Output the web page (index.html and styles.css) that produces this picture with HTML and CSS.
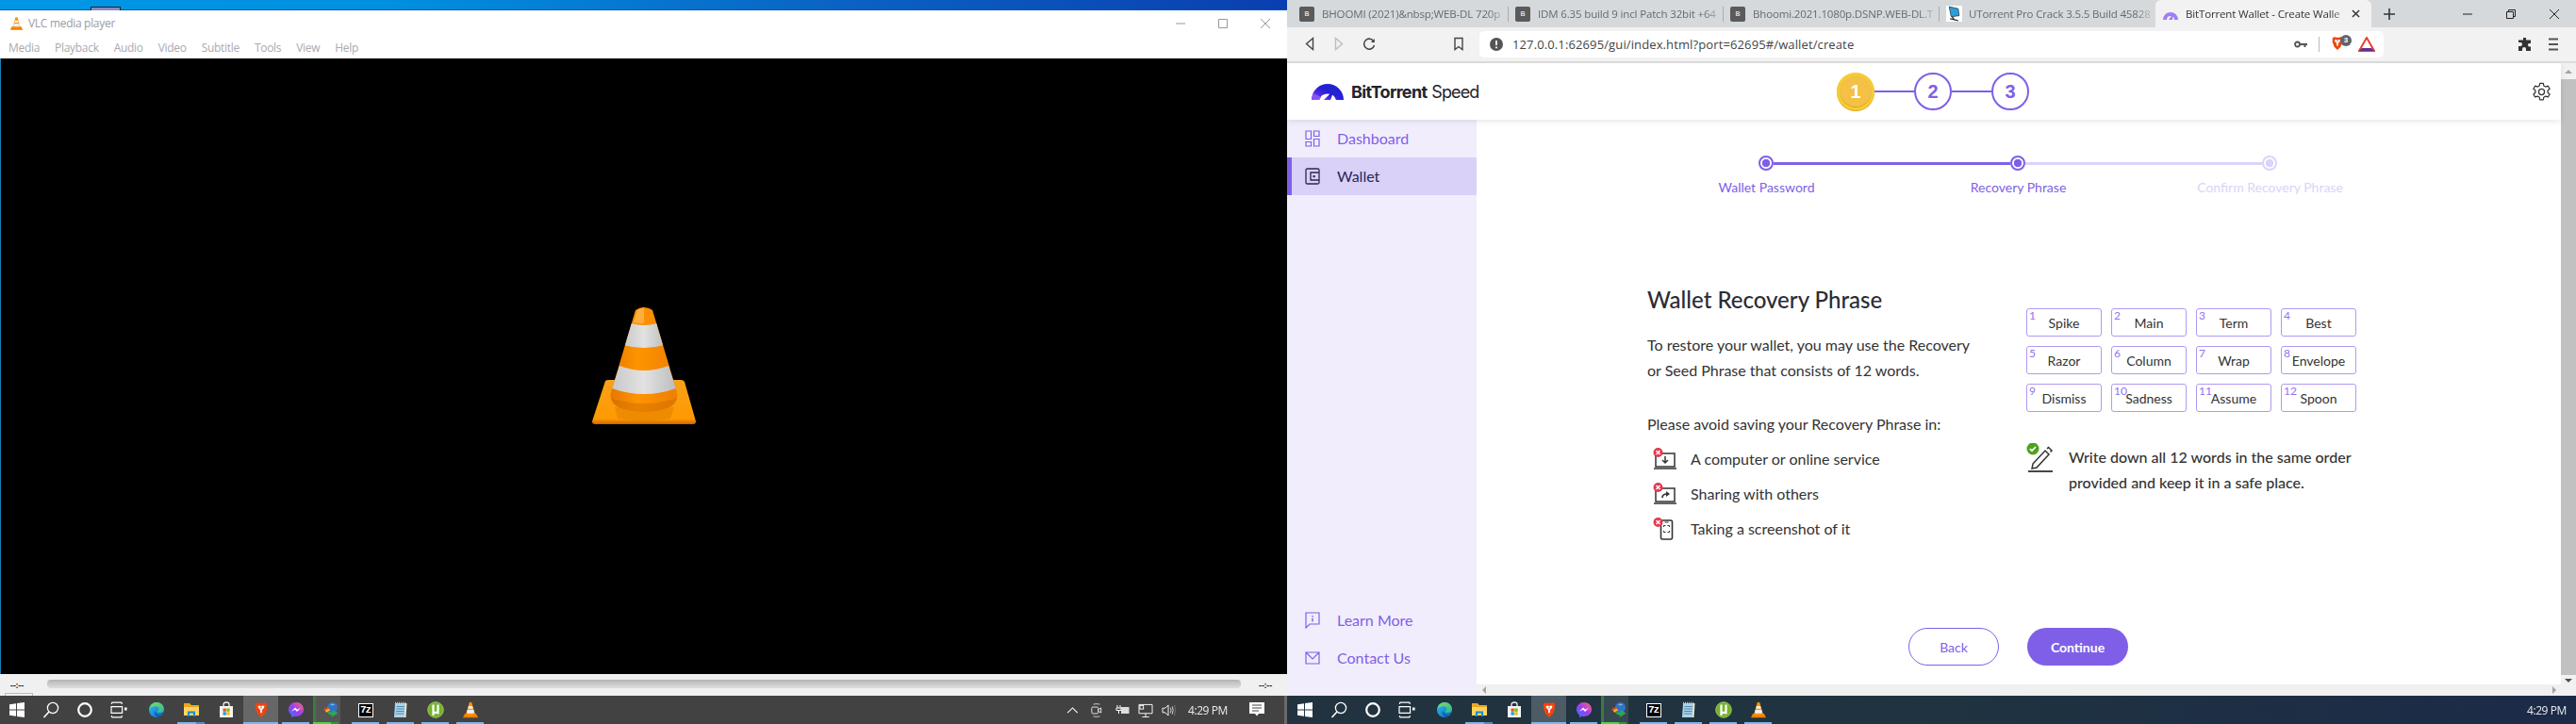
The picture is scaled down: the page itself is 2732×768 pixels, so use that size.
FILE: index.html
```html
<!DOCTYPE html>
<html lang="en">
<head>
<meta charset="utf-8">
<title>VLC and BitTorrent Wallet</title>
<link rel="stylesheet" href="styles.css">
</head>
<body>
<svg class="sprite" aria-hidden="true">
  <defs>
    <linearGradient id="gEdge" x1="0" y1="0" x2="1" y2="1"><stop offset="0" stop-color="#35c1f1"/><stop offset=".55" stop-color="#1b8fd6"/><stop offset="1" stop-color="#0b55a8"/></linearGradient>
    <linearGradient id="gEdgeG" x1="0" y1="0" x2="1" y2="1"><stop offset="0" stop-color="#7fe05a"/><stop offset="1" stop-color="#2ab5a0"/></linearGradient>
    <linearGradient id="gMsg" x1="0" y1="1" x2="1" y2="0"><stop offset="0" stop-color="#2a7bff"/><stop offset=".5" stop-color="#a03cf0"/><stop offset="1" stop-color="#ff6a6a"/></linearGradient>
    <linearGradient id="gCone" x1="0" y1="0" x2="1" y2="0"><stop offset="0" stop-color="#e07000"/><stop offset=".4" stop-color="#ff9400"/><stop offset="1" stop-color="#ea7a00"/></linearGradient>
    <linearGradient id="gBase" x1="0" y1="0" x2="0" y2="1"><stop offset="0" stop-color="#f8a11a"/><stop offset=".88" stop-color="#ff9a00"/><stop offset="1" stop-color="#c96400"/></linearGradient>
    <linearGradient id="gBand" x1="0" y1="0" x2="1" y2="0"><stop offset="0" stop-color="#c8c8c8"/><stop offset=".5" stop-color="#e2e2e2"/><stop offset="1" stop-color="#bdbdbd"/></linearGradient>
    <linearGradient id="gLogo" x1="0" y1="1" x2="1" y2="0"><stop offset="0" stop-color="#7a3cf0"/><stop offset=".5" stop-color="#2a1fd8"/><stop offset="1" stop-color="#1426c8"/></linearGradient>
    <clipPath id="coneClip"><path d="M64 19Q73 13 82 19L108 106Q112 126 73 127Q34 126 38 106Z"/></clipPath>
    <symbol id="i-win" viewBox="0 0 18 18"><path fill="#fff" d="M1 3.200 8 2.200V8.400H1ZM9 2 17 1V8.400H9ZM1 9.400H8V15.800L1 14.800ZM9 9.400H17V17L9 16Z"/></symbol>
    <symbol id="i-search" viewBox="0 0 18 18"><circle cx="11" cy="7" r="5.600" fill="none" stroke="#fff" stroke-width="1.300"/><path d="M7 11 1.500 17" stroke="#fff" stroke-width="1.600"/></symbol>
    <symbol id="i-cortana" viewBox="0 0 18 18"><circle cx="9" cy="9" r="6.800" fill="none" stroke="#fff" stroke-width="2.200"/></symbol>
    <symbol id="i-tv" viewBox="0 0 18 18"><path fill="none" stroke="#fff" stroke-width="1.200" d="M1 5.600H12.600V12.400H1ZM1.500 1.200H12.200M1.500 16.800H12.200M1.500 1.200V3M12.200 1.200V3M1.500 15V16.800M12.200 15V16.800"/><rect x="15" y="6.500" width="2.600" height="3" fill="#fff"/></symbol>
    <symbol id="i-edge" viewBox="0 0 18 18"><circle cx="9" cy="9" r="8" fill="url(#gEdge)"/><path fill="url(#gEdgeG)" d="M1.200 8C2.400 3.200 6 1 9 1c4.500 0 8 3.200 8 7.500 0 2.300-2 3.500-4 3.500-1.500 0-3-.5-3-1.500C11.500 9 12 8 11 6.500 9.500 4.500 4 4.500 1.200 8Z"/><path fill="#0e4f9e" d="M7 10c-1 3 1.500 6.500 5.500 6 1-.1 2-.6 2.500-1.200-4 1.200-7-1.300-8-4.800Z"/></symbol>
    <symbol id="i-folder" viewBox="0 0 18 18"><path fill="#e9a821" d="M1 2H7L9 4H17V7H1Z"/><path fill="#ffd45e" d="M1 6H17V15H1Z"/><path fill="#1b87d6" d="M5 16V10.500H13V16H11V12.500H7V16Z"/></symbol>
    <symbol id="i-store" viewBox="0 0 18 18"><path fill="#f4f4f4" d="M2 5H16V17H2Z"/><path fill="none" stroke="#f4f4f4" stroke-width="1.300" d="M6 5V3A3 2 0 0 1 12 3V5"/><rect x="5.500" y="7.500" width="3.300" height="3.300" fill="#f25022"/><rect x="9.300" y="7.500" width="3.300" height="3.300" fill="#7fba00"/><rect x="5.500" y="11.300" width="3.300" height="3.300" fill="#00a4ef"/><rect x="9.300" y="11.300" width="3.300" height="3.300" fill="#ffb900"/></symbol>
    <symbol id="i-brave" viewBox="0 0 18 20"><path fill="#f1440f" d="M4.500 1 6.500 2H11.500L13.500 1 16 3.500 15.500 5.500 16 7.500 13.500 14.500 9 19 4.500 14.500 2 7.500 2.500 5.500 2 3.500Z"/><path fill="#fff" d="M5 5.500 7.500 5 9 6 10.500 5 13 5.500 12 8 10 10V13L9 14 8 13V10L6 8Z"/><path fill="#f1440f" d="M8.200 6.800H9.800L9 9.500Z"/></symbol>
    <symbol id="i-msg" viewBox="0 0 18 18"><path fill="url(#gMsg)" d="M9 1c4.600 0 8 3.300 8 7.600s-3.400 7.500-8 7.500c-.9 0-1.700-.1-2.400-.3L4 17.200V14.500C2.200 13 1 11 1 8.600 1 4.300 4.400 1 9 1Z"/><path fill="#fff" d="M4 10.800 8 6.600l2.300 2.200 3.800-2.200-4 4.400L7.800 8.800Z"/></symbol>
    <symbol id="i-idm" viewBox="0 0 18 18"><circle cx="10.500" cy="6.500" r="5.500" fill="#2f73c9"/><path fill="#7ab2ea" d="M8 3.500c2-1.500 4.500-1 5 .5-1.500.5-4 .5-5-.5Z"/><path fill="#e04a2a" d="M1 9a7 5 0 0 1 7-3L7 8a5 3 0 0 0-4 2.500Z"/><path fill="#f2c21f" d="M3 10.500A5 3 0 0 1 7 8L8 10A3 2 0 0 0 5 12Z"/><path fill="#2fa84f" d="M5 11 11 11.500 10.500 9 16.500 12.500 9.500 17 10 14.500C7.500 14.500 6 13.500 5 11Z"/></symbol>
    <symbol id="i-note" viewBox="0 0 18 18"><path fill="#a9d3ec" d="M3 2H15L14 17H2Z"/><path fill="#f4e8c8" d="M14 2h1.500L14.500 17H13Z"/><path stroke="#4e7f9e" stroke-width=".9" d="M4.500 5.500H13M4.300 8H12.800M4.100 10.500H12.600M3.900 13H12.400"/><path stroke="#dfe9ee" stroke-width="1" stroke-dasharray="1 1" d="M3 1.300H15"/></symbol>
    <symbol id="i-ut" viewBox="0 0 18 18"><circle cx="9" cy="9" r="8.300" fill="#76b22f"/><circle cx="9" cy="9" r="8.300" fill="none" stroke="#a8d468" stroke-width=".8"/><path fill="none" stroke="#fff" stroke-width="2.200" d="M6.500 3.500V15M6.500 11C8 12.500 11.500 12.500 11.500 9.500V3.500"/><path stroke="#fff" stroke-width="2" d="M11.500 10.500V13.500"/></symbol>
    <symbol id="i-vlc" viewBox="0 0 18 18"><path fill="#ef7d00" d="M3 13H15L17 17.200H1Z"/><path fill="#ff9200" d="M7.800 1H10.200L14 14C12 15.500 6 15.500 4 14Z"/><path fill="#eee" d="M7 5H11L11.800 7.800H6.200ZM5.700 9H12.300L13.200 12.200C11 13 7 13 4.800 12.200Z"/></symbol>
    <symbol id="i-cone" viewBox="0 0 140 150">
      <path fill="url(#gBase)" d="M32 94Q33 93 36 93H112Q115 93 116 95L128 137Q128 140 125 140H21Q18 140 18 137Z"/>
      <path fill="#e58200" opacity=".65" d="M42 122H105L101 134Q73 138 45 134Z"/>
      <g clip-path="url(#coneClip)">
        <rect x="30" y="10" width="90" height="120" fill="url(#gCone)"/>
        <path fill="url(#gBand)" d="M59 33Q73 37 87 33L95 56Q73 62 51 56Z"/>
        <path fill="url(#gBand)" d="M47 78Q73 88 99 78L107 102Q73 114 39 102Z"/>
        <path fill="#c96a00" opacity=".45" d="M38 112Q73 124 108 112V130H38Z"/>
      </g>
      <path fill="#fff" opacity=".25" d="M66 19Q70 16 73 16V33Q68 33 62 32Z"/>
    </symbol>
  </defs>
</svg>

<div class="desktop">
  <section class="screen screen-left">
    <div class="wallpaper"><span class="peek"></span></div>
    <div class="vlc">
      <div class="vlc-title">
        <svg class="vlc-logo"><use href="#i-vlc"/></svg>
        <span class="vlc-name">VLC media player</span>
        <div class="vlc-winbtns">
          <svg class="wb" viewBox="0 0 10 10"><path d="M0 5H10" stroke="#999" stroke-width="1"/></svg>
          <svg class="wb" viewBox="0 0 10 10"><path d="M.5.500H9.500V9.500H.5Z" fill="none" stroke="#999" stroke-width="1"/></svg>
          <svg class="wb" viewBox="0 0 10 10"><path d="M0 0 10 10M10 0 0 10" stroke="#999" stroke-width="1"/></svg>
        </div>
      </div>
      <nav class="vlc-menu">
        <span>Media</span><span>Playback</span><span>Audio</span><span>Video</span><span>Subtitle</span><span>Tools</span><span>View</span><span>Help</span>
      </nav>
      <div class="vlc-video"><svg class="cone"><use href="#i-cone"/></svg></div>
      <div class="vlc-controls">
        <span class="vlc-time">--:--</span>
        <div class="vlc-slider"></div>
        <span class="vlc-time">--:--</span>
        <span class="vlc-tab"></span>
      </div>
    </div>
    <footer class="taskbar tb-left">
      <div class="tb-sys"><svg class="ic"><use href="#i-win"/></svg></div>
      <div class="tb-sys"><svg class="ic"><use href="#i-search"/></svg></div>
      <div class="tb-sys"><svg class="ic"><use href="#i-cortana"/></svg></div>
      <div class="tb-sys"><svg class="ic"><use href="#i-tv"/></svg></div>
      <div class="tb-spacer"></div>
      <div class="tb-app"><svg class="ic"><use href="#i-edge"/></svg></div>
      <div class="tb-app on split"><svg class="ic"><use href="#i-folder"/></svg></div>
      <div class="tb-app"><svg class="ic"><use href="#i-store"/></svg></div>
      <div class="tb-app on active"><svg class="ic"><use href="#i-brave"/></svg></div>
      <div class="tb-app on"><svg class="ic"><use href="#i-msg"/></svg></div>
      <div class="tb-app idm"><svg class="ic"><use href="#i-idm"/></svg></div>
      <div class="tb-app on"><span class="sevenz">7z</span></div>
      <div class="tb-app on"><svg class="ic"><use href="#i-note"/></svg></div>
      <div class="tb-app on"><svg class="ic"><use href="#i-ut"/></svg></div>
      <div class="tb-app on"><svg class="ic"><use href="#i-vlc"/></svg></div>
      <div class="tray">
        <svg class="tr tr-chev" viewBox="0 0 14 8"><path d="M1 7 7 1 13 7" fill="none" stroke="#fff" stroke-width="1.200"/></svg>
        <svg class="tr tr-meet" viewBox="0 0 14 18"><path d="M3 1.500Q7 .5 11 1.500M3 16.500Q7 17.500 11 16.500" fill="none" stroke="#ddd"/><rect x="1" y="5" width="8" height="8" rx="1.500" fill="none" stroke="#fff"/><path d="M9 8 12.500 6V12L9 10" fill="none" stroke="#fff"/></svg>
        <svg class="tr tr-batt" viewBox="0 0 16 12"><path d="M3 1V4M6 1V4M2 4H7V6.500H2ZM4.500 6.500V10" stroke="#fff" fill="none"/><rect x="7" y="3" width="8.500" height="7" fill="#ddd"/></svg>
        <svg class="tr tr-net" viewBox="0 0 16 16"><path d="M.5 1.500H15.500V11.500H.5ZM8 11.500V15M4 15.500H12" fill="none" stroke="#fff"/><rect x="1.500" y="2.500" width="4" height="4" fill="none" stroke="#fff"/></svg>
        <svg class="tr tr-spk" viewBox="0 0 16 14"><path d="M1 4.500H4L7.500 1V13L4 9.500H1Z" fill="none" stroke="#fff"/><path d="M10 4Q11.500 7 10 10M12 2.500Q14 7 12 11.500" fill="none" stroke="#ddd"/><path d="M14.500 1Q16.500 7 14.500 13" fill="none" stroke="#777"/></svg>
        <span class="clock">4:29 PM</span>
        <svg class="tr tr-notif" viewBox="0 0 16 16"><path d="M0 0H16V12H10L8 14.500 6 12H0Z" fill="#fff"/><path d="M3 3H13M3 6H13M3 9H10" stroke="#444" stroke-width="1"/></svg>
      </div>
    </footer>
  </section>

  <section class="screen screen-right">
    <div class="browser">
      <div class="tabstrip">
        <div class="tab tab-first"><span class="fav">B</span><span class="tab-text">BHOOMI (2021)&amp;nbsp;WEB-DL 720p</span></div>
        <div class="tab tab-second"><span class="fav">B</span><span class="tab-text">IDM 6.35 build 9 incl Patch 32bit +64</span></div>
        <div class="tab"><span class="fav">B</span><span class="tab-text">Bhoomi.2021.1080p.DSNP.WEB-DL.T</span></div>
        <div class="tab tab-last"><svg class="fav-pc" viewBox="0 0 16 16"><rect width="16" height="16" fill="#fff"/><path d="M3 1 12 3 13 10 5 11Z" fill="#2b9fd8" stroke="#234" stroke-width=".7"/><path d="M4 13 12 15M6 11 8 14" stroke="#333" stroke-width="1.200"/></svg><span class="tab-text">UTorrent Pro Crack 3.5.5 Build 45828</span></div>
        <div class="tab-active">
          <svg class="fav-bt" viewBox="0 0 16 12"><path fill="#9f7ff5" d="M0 12A8 8 0 0 1 16 12H12A4 4 0 0 0 4 12Z"/><path fill="#9f7ff5" d="M6 12 11 5 10 12Z"/></svg>
          <span class="tab-text tab-text-on">BitTorrent Wallet - Create Walle</span>
          <svg class="tab-x" viewBox="0 0 10 10"><path d="M1 1 9 9M9 1 1 9" stroke="#333" stroke-width="1.600"/></svg>
        </div>
        <svg class="tab-new" viewBox="0 0 12 12"><path d="M6 0V12M0 6H12" stroke="#333" stroke-width="1.600"/></svg>
        <div class="win-btns">
          <svg class="wb2" viewBox="0 0 10 10"><path d="M0 5H10" stroke="#222"/></svg>
          <svg class="wb2" viewBox="0 0 10 10"><path d="M.5 2.500H7.500V9.500H.5ZM2.500 2.500V.5H9.500V7.500H7.500" fill="none" stroke="#222"/></svg>
          <svg class="wb2" viewBox="0 0 10 10"><path d="M0 0 10 10M10 0 0 10" stroke="#222"/></svg>
        </div>
      </div>
      <div class="toolbar">
        <svg class="tbi tb-back" viewBox="0 0 10 14"><path d="M8.500 1 1.500 7 8.500 13Z" fill="none" stroke="#444" stroke-width="1.400"/></svg>
        <svg class="tbi tb-fwd" viewBox="0 0 10 14"><path d="M1.500 1 8.500 7 1.500 13Z" fill="none" stroke="#bbb" stroke-width="1.400"/></svg>
        <svg class="tbi tb-reload" viewBox="0 0 14 14"><path d="M12 4A5.500 5.500 0 1 0 12.500 8" fill="none" stroke="#444" stroke-width="1.500"/><path d="M12.800 1V5H8.800Z" fill="#444"/></svg>
        <svg class="tbi tb-mark" viewBox="0 0 10 14"><path d="M1 1H9V13L5 10 1 13Z" fill="none" stroke="#444" stroke-width="1.400"/></svg>
        <div class="urlbar">
          <svg class="url-info" viewBox="0 0 14 14"><circle cx="7" cy="7" r="7" fill="#555"/><path d="M7 3V8M7 9.500V11.200" stroke="#fff" stroke-width="1.800"/></svg>
          <span class="url-text">127.0.0.1:62695/gui/index.html?port=62695#/wallet/create</span>
          <svg class="url-key" viewBox="0 0 14 8"><circle cx="3.500" cy="4" r="2.500" fill="none" stroke="#555" stroke-width="1.800"/><path d="M6 3H14V5H12.500V7H10.500V5H6Z" fill="#555"/></svg>
          <span class="url-sep"></span>
          <div class="brave-wrap">
            <svg class="url-brave" viewBox="0 0 18 20"><use href="#i-brave"/></svg>
            <span class="brave-badge">3</span>
          </div>
          <svg class="url-bat" viewBox="0 0 18 16"><path d="M9 1 17 15H1Z" fill="none" stroke="#e8432a" stroke-width="2"/><path d="M1 15H17L14 12H4Z" fill="#662d91"/></svg>
        </div>
        <svg class="tbi tb-ext" viewBox="0 0 14 14"><path d="M5 0H8V2.500H13V6H11A2 2 0 0 0 11 9.500H13V14H8V12A2 2 0 0 0 4 12V14H0V9H2A2 2 0 0 0 2 5H0V2.500H5Z" fill="#333"/></svg>
        <svg class="tbi tb-menu" viewBox="0 0 10 14"><path d="M0 1.500H10M0 7H10M0 12.500H10" stroke="#555" stroke-width="1.800"/></svg>
      </div>

      <div class="viewport">
        <div class="page">
          <header class="app-header">
            <div class="logo">
              <svg class="logo-mark" viewBox="0 0 34 18"><path fill="url(#gLogo)" d="M0 18A17 17 0 0 1 34 18H26A9.500 9.500 0 0 0 8 18Z"/><path fill="url(#gLogo)" d="M13 18 24.500 6.500 20 18Z"/><path fill="#8a55f5" d="M0 18Q.5 14 2 11L10 15 8 18Z"/></svg>
              <span class="logo-a">BitTorrent</span><span class="logo-b">Speed</span>
            </div>
            <div class="stepper">
              <span class="coin">1</span><span class="st-line"></span>
              <span class="st-num">2</span><span class="st-line"></span>
              <span class="st-num">3</span>
            </div>
            <svg class="gear" viewBox="0 0 24 24"><path fill="none" stroke="#333" stroke-width="1.400" stroke-linejoin="round" d="M10 1.500h4l.6 3 2.300 1.300 2.900-1 2 3.400-2.300 2 0 2.600 2.300 2-2 3.400-2.900-1-2.300 1.300-.6 3h-4l-.6-3-2.300-1.300-2.900 1-2-3.400 2.300-2 0-2.600-2.300-2 2-3.400 2.900 1 2.300-1.300Z"/><circle cx="12" cy="12" r="3.500" fill="none" stroke="#333" stroke-width="1.400"/></svg>
          </header>
          <div class="app-body">
            <aside class="sidebar">
              <a class="nav-item">
                <svg class="nav-ic" viewBox="0 0 16 18"><path fill="none" stroke="#7f5fe8" stroke-width="1.200" d="M1 1H6.500V9.500H1ZM9.500 1H15V6.500H9.500ZM9.500 9.500H15V17H9.500ZM1 12.500H6.500V17H1Z"/></svg>
                <span>Dashboard</span>
              </a>
              <a class="nav-item nav-active">
                <svg class="nav-ic" viewBox="0 0 16 18"><path fill="none" stroke="#2e2456" stroke-width="1.300" d="M2.500 1H13.500Q15 1 15 2.500V15.500Q15 17 13.500 17H2.500Q1 17 1 15.500V2.500Q1 1 2.500 1ZM15 5H6V13H15"/><rect x="8.500" y="8" width="2.200" height="2.200" fill="#2e2456"/></svg>
                <span>Wallet</span>
              </a>
              <a class="nav-item nav-push">
                <svg class="nav-ic" viewBox="0 0 16 18"><path fill="none" stroke="#7f5fe8" stroke-width="1.200" d="M1 1H15V13H5L1 17Z"/><path stroke="#7f5fe8" stroke-width="1.400" d="M8 4V5.500M8 6.800V10.500"/></svg>
                <span>Learn More</span>
              </a>
              <a class="nav-item">
                <svg class="nav-ic" viewBox="0 0 16 18"><path fill="none" stroke="#7f5fe8" stroke-width="1.200" d="M1 3H15V15H1ZM1 3 8 10 15 3"/></svg>
                <span>Contact Us</span>
              </a>
            </aside>
            <main class="main">
              <div class="content">
                <div class="prog-track">
                  <span class="pdot"></span><span class="pline"></span>
                  <span class="pdot"></span><span class="pline pline-off"></span>
                  <span class="pdot pdot-off"></span>
                </div>
                <div class="prog-labels">
                  <span>Wallet Password</span><span>Recovery Phrase</span><span class="off">Confirm Recovery Phrase</span>
                </div>
                <div class="columns">
                  <div class="col-left">
                    <h1>Wallet Recovery Phrase</h1>
                    <p class="lead">To restore your wallet, you may use the Recovery<br>or Seed Phrase that consists of 12 words.</p>
                    <p class="avoid">Please avoid saving your Recovery Phrase in:</p>
                    <ul class="avoid-list">
                      <li>
                        <span class="aic"><svg viewBox="0 0 26 24"><path fill="none" stroke="#333" stroke-width="1.500" d="M3 6H23V20H3ZM1 22H25"/><path fill="none" stroke="#333" stroke-width="1.500" d="M13 9V16M10 13 13 16 16 13"/><circle cx="5.500" cy="5" r="5" fill="#e5384f"/><path stroke="#fff" stroke-width="1.500" d="M3.500 3 7.500 7M7.500 3 3.500 7"/></svg></span>
                        A computer or online service
                      </li>
                      <li>
                        <span class="aic"><svg viewBox="0 0 26 24"><path fill="none" stroke="#333" stroke-width="1.500" d="M3 6H23V20H3ZM1 22H25"/><path fill="none" stroke="#333" stroke-width="1.700" d="M10 16Q10 12 15 12"/><path fill="#333" d="M14 9 18 12 14 15Z"/><circle cx="5.500" cy="5" r="5" fill="#e5384f"/><path stroke="#fff" stroke-width="1.500" d="M3.500 3 7.500 7M7.500 3 3.500 7"/></svg></span>
                        Sharing with others
                      </li>
                      <li>
                        <span class="aic"><svg viewBox="0 0 26 24"><rect x="8.500" y="3" width="12" height="20" rx="1.500" fill="none" stroke="#333" stroke-width="1.600"/><path fill="none" stroke="#333" d="M11.500 10V8.500H13.500M15.500 8.500H17.500V10M17.500 14V15.500H15.500M13.500 15.500H11.500V14M12.500 5H16.500"/><circle cx="5.500" cy="5" r="5" fill="#e5384f"/><path stroke="#fff" stroke-width="1.500" d="M3.500 3 7.500 7M7.500 3 3.500 7"/></svg></span>
                        Taking a screenshot of it
                      </li>
                    </ul>
                  </div>
                  <div class="col-right">
                    <div class="words">
                      <div class="word"><i>1</i>Spike</div>
                      <div class="word"><i>2</i>Main</div>
                      <div class="word"><i>3</i>Term</div>
                      <div class="word"><i>4</i>Best</div>
                      <div class="word"><i>5</i>Razor</div>
                      <div class="word"><i>6</i>Column</div>
                      <div class="word"><i>7</i>Wrap</div>
                      <div class="word"><i>8</i>Envelope</div>
                      <div class="word"><i>9</i>Dismiss</div>
                      <div class="word"><i>10</i>Sadness</div>
                      <div class="word"><i>11</i>Assume</div>
                      <div class="word"><i>12</i>Spoon</div>
                    </div>
                    <div class="note">
                      <svg class="note-ic" viewBox="0 0 30 33"><path fill="none" stroke="#333" stroke-width="1.500" d="M7 22 20 8 24 12 11 26 6 27ZM22 6 23.500 4.500 27 8 25.500 9.500"/><path stroke="#333" stroke-width="1.800" d="M2 30H28"/><circle cx="7" cy="6" r="6.500" fill="#4ea31b"/><path fill="none" stroke="#fff" stroke-width="1.700" d="M3.800 6 6 8.200 10 4"/></svg>
                      <p>Write down all 12 words in the same order<br>provided and keep it in a safe place.</p>
                    </div>
                  </div>
                </div>
                <div class="actions">
                  <button class="btn btn-back">Back</button>
                  <button class="btn btn-next">Continue</button>
                </div>
              </div>
              <div class="hscroll">
                <span class="arrow-l"></span><span class="arrow-r"></span>
              </div>
            </main>
          </div>
        </div>
        <div class="vscroll">
          <span class="arrow-u"></span>
          <span class="thumb"></span>
          <span class="arrow-d"></span>
        </div>
      </div>
    </div>
    <footer class="taskbar tb-right">
      <div class="tb-sys"><svg class="ic"><use href="#i-win"/></svg></div>
      <div class="tb-sys"><svg class="ic"><use href="#i-search"/></svg></div>
      <div class="tb-sys"><svg class="ic"><use href="#i-cortana"/></svg></div>
      <div class="tb-sys"><svg class="ic"><use href="#i-tv"/></svg></div>
      <div class="tb-spacer"></div>
      <div class="tb-app"><svg class="ic"><use href="#i-edge"/></svg></div>
      <div class="tb-app on split"><svg class="ic"><use href="#i-folder"/></svg></div>
      <div class="tb-app"><svg class="ic"><use href="#i-store"/></svg></div>
      <div class="tb-app on active"><svg class="ic"><use href="#i-brave"/></svg></div>
      <div class="tb-app on"><svg class="ic"><use href="#i-msg"/></svg></div>
      <div class="tb-app idm"><svg class="ic"><use href="#i-idm"/></svg></div>
      <div class="tb-app on"><span class="sevenz">7z</span></div>
      <div class="tb-app on"><svg class="ic"><use href="#i-note"/></svg></div>
      <div class="tb-app on"><svg class="ic"><use href="#i-ut"/></svg></div>
      <div class="tb-app on"><svg class="ic"><use href="#i-vlc"/></svg></div>
      <div class="tray"><span class="clock">4:29 PM</span></div>
    </footer>
  </section>
</div>
</body>
</html>
```
FILE: styles.css
```css
* { box-sizing: border-box; }
html, body { margin: 0; padding: 0; width: 2732px; height: 768px; overflow: hidden; background: #000; }
body { font-family: "Open Sans", "Noto Sans", sans-serif; }
.sprite { position: absolute; width: 0; height: 0; }
.desktop { display: flex; width: 2732px; height: 768px; }
.screen { display: flex; flex-direction: column; height: 768px; }
.screen-left { width: 1365px; }
.screen-right { width: 1367px; }

/* ---------- left: wallpaper + VLC ---------- */
.wallpaper { height: 11px; background: linear-gradient(90deg, #0096e6 0, #0090e0 30%, #0a63c4 65%, #0a3eb0 100%); border-bottom: 1px solid #0a5aa8; padding: 7px 0 0 96px; }
.peek { display: block; width: 32px; height: 4px; background: #8a8ac0; border: 1px solid #222; border-bottom: 0; }
.vlc { flex: 1; display: flex; flex-direction: column; min-height: 0; }
.vlc-title { height: 27px; background: #fff; display: flex; align-items: center; padding-left: 10px; }
.vlc-logo { width: 15px; height: 16px; }
.vlc-name { margin-left: 5px; font-size: 12px; color: #9c9ca2; letter-spacing: -.3px; }
.vlc-winbtns { margin-left: auto; display: flex; gap: 35px; padding-right: 18px; }
.wb { width: 10px; height: 10px; display: block; }
.vlc-menu { height: 24px; background: #fff; display: flex; align-items: center; padding-left: 9px; gap: 16px; font-size: 12px; letter-spacing: -.3px; color: #a9a9b1; }
.vlc-video { flex: 1; background: #000; border-left: 1px solid #1a7fb5; display: flex; align-items: center; justify-content: center; padding: 0 6px 7px 0; }
.cone { width: 140px; height: 150px; display: block; }
.vlc-controls { height: 23px; background: #f0f0f0; display: flex; align-items: center; padding: 0 11px; position: relative; }
.vlc-time { width: 19px; font-size: 9px; line-height: 1; color: #222; font-weight: 700; white-space: nowrap; }
.vlc-slider { width: 1266px; height: 9px; margin: -3px 19px 0 20px; border-radius: 4px; background: linear-gradient(180deg, #b4b4b4, #dedede); }
.vlc-tab { position: absolute; left: 5px; bottom: 0; width: 30px; height: 3px; border: 1px solid #bbb; border-bottom: 0; }

/* ---------- taskbars ---------- */
.taskbar { height: 30px; display: flex; align-items: stretch; flex: none; }
.tb-left { background: #424242; border-right: 3px solid #6a6a6a; }
.tb-right { background: linear-gradient(90deg, #22333f 0, #1f3340 50%, #1c2a48 100%); padding-left: 1px; }
.tb-sys { width: 36px; display: flex; align-items: center; justify-content: center; }
.tb-spacer { width: 3px; }
.tb-app { width: 37px; display: flex; align-items: center; justify-content: center; position: relative; }
.ic { width: 18px; height: 18px; display: block; }
.tb-app.active { background: rgba(255,255,255,.2); }
.tb-app.on::after { content: ""; position: absolute; left: 4px; right: 4px; bottom: 0; height: 2px; background: #76b9ed; }
.tb-app.active::after { left: 0; right: 0; }
.tb-app.split::after { background: linear-gradient(90deg, #76b9ed 0 68%, #4e8fc0 68%); }
.tb-app.idm { background: linear-gradient(90deg, #3d7a3d 0 3px, rgba(255,255,255,.1) 3px 29px, transparent 29px); }
.tb-app.idm::after { content: ""; position: absolute; left: 0; width: 27px; bottom: 0; height: 2px; background: linear-gradient(90deg, #4fd34a 0 70%, #2a9a3a 70%); }
.sevenz { width: 16px; height: 15px; background: #000; border: 1px solid #fff; color: #fff; font: 700 11px/13px "Liberation Mono", monospace; text-align: center; letter-spacing: -1px; }
.tray { margin-left: auto; display: flex; align-items: center; }
.tb-left .tray { padding-right: 21px; }
.tb-right .tray { padding-right: 10px; }
.clock { color: #fff; font-size: 12px; letter-spacing: -.4px; opacity: .9; white-space: nowrap; }
.tb-left .clock { margin-left: 13px; margin-right: 23px; }
.tr { display: block; }
.tr-chev { width: 13px; height: 7px; margin-right: 13px; }
.tr-meet { width: 12px; height: 17px; margin-right: 13px; }
.tr-batt { width: 16px; height: 12px; margin-right: 9px; }
.tr-net { width: 16px; height: 15px; margin-right: 9px; }
.tr-spk { width: 15px; height: 13px; }
.tr-notif { width: 16px; height: 16px; }

/* ---------- browser chrome ---------- */
.browser { flex: 1; display: flex; flex-direction: column; min-height: 0; }
.tabstrip { height: 29px; flex: none; background: #d5d9dc; display: flex; align-items: stretch; padding-left: 13px; }
.tab { width: 229px; flex: none; display: flex; align-items: center; gap: 8px; padding: 0 6px 0 7px; position: relative; }
.tab::after { content: ""; position: absolute; right: 0; top: 7px; bottom: 6px; width: 1px; background: #a9adb1; }
.tab-first { width: 222px; padding-left: 0; }
.tab-second { width: 228px; }
.tab-last::after { display: none; }
.fav { flex: none; width: 16px; height: 16px; background: #5a5a5a; color: #ddd; border-radius: 2px; font: 700 7px/16px "Liberation Sans", sans-serif; text-align: center; }
.fav-pc { flex: none; width: 17px; height: 17px; margin-right: -1px; }
.tab-text { flex: 1; min-width: 0; white-space: nowrap; font-size: 11.5px; letter-spacing: -.15px; color: #666a6e; -webkit-mask-image: linear-gradient(90deg, #000 92%, rgba(0,0,0,.25) 100%); mask-image: linear-gradient(90deg, #000 92%, rgba(0,0,0,.25) 100%); }
.tab-text-on { color: #333; }
.tab-active { width: 229px; flex: none; background: #f2f2f2; border-radius: 6px 6px 0 0; display: flex; align-items: center; padding: 0 8px; gap: 8px; }
.tab-active .tab-x { margin: 0 4px 0 0; }
.fav-bt { flex: none; width: 16px; height: 12px; }
.tab-x { flex: none; width: 9px; height: 9px; }
.tab-new { width: 12px; height: 12px; align-self: center; margin-left: 13px; }
.win-btns { margin-left: auto; display: flex; align-items: center; gap: 36px; padding-right: 18px; }
.wb2 { width: 10px; height: 10px; display: block; }
.toolbar { height: 38px; flex: none; background: #f2f2f2; border-bottom: 2px solid #dcdcdc; display: flex; align-items: center; padding-bottom: 1px; }
.tbi { display: block; flex: none; }
.tb-back { width: 10px; height: 15px; margin-left: 19px; }
.tb-fwd { width: 10px; height: 15px; margin-left: 21px; }
.tb-reload { width: 14px; height: 14px; margin-left: 20px; }
.tb-mark { width: 10px; height: 15px; margin-left: 83px; }
.urlbar { width: 959px; height: 28px; margin-left: 17px; background: #fff; border-radius: 5px; display: flex; align-items: center; padding-left: 11px; }
.url-info { width: 14px; height: 14px; }
.url-text { margin-left: 10px; font-size: 13px; letter-spacing: .12px; color: #444; white-space: nowrap; }
.url-key { width: 14px; height: 8px; margin-left: auto; }
.url-sep { width: 1px; height: 16px; background: #bbb; margin: 0 12px 0 12px; }
.brave-wrap { position: relative; width: 24px; height: 20px; }
.url-brave { width: 14px; height: 18px; display: block; }
.brave-badge { position: absolute; left: 10px; top: 0; width: 12px; height: 12px; border-radius: 50%; background: #5f6368; color: #fff; font: 700 8px/12px "Liberation Sans", sans-serif; text-align: center; }
.url-bat { width: 18px; height: 16px; margin: 0 9px 0 5px; }
.tb-ext { width: 14px; height: 14px; margin-left: 143px; }
.tb-menu { width: 10px; height: 14px; margin-left: 18px; }

/* ---------- page ---------- */
.viewport { flex: 1; display: flex; min-height: 0; }
.page { flex: 1; display: flex; flex-direction: column; min-width: 0; font-family: Lato, sans-serif; background: #fff; }
.app-header { height: 60px; flex: none; background: #fff; display: flex; align-items: center; padding-left: 26px; position: relative; z-index: 1; box-shadow: 0 2px 6px rgba(0,0,0,.09); }
.logo { width: 177px; display: flex; align-items: center; color: #23232b; font-family: Inter, sans-serif; }
.logo-mark { width: 34px; height: 18px; flex: none; }
.logo-a { margin-left: 8px; font-size: 18px; font-weight: 700; letter-spacing: -.7px; }
.logo-b { margin-left: 5px; font-size: 18px; font-weight: 400; letter-spacing: -.9px; }
.stepper { display: flex; align-items: center; margin-left: 380px; }
.coin, .st-num { width: 40px; height: 40px; border-radius: 50%; display: flex; align-items: center; justify-content: center; font: 700 20px "Liberation Sans", sans-serif; }
.coin { background: #f4c144; border: 3px solid #f5cc35; color: #fff; box-shadow: inset 0 -1px 0 #dca21e, 0 1px 0 #e0a81e; }
.st-num { border: 2px solid #7f5fe8; color: #7f5fe8; }
.st-line { width: 42px; height: 2px; background: #7f5fe8; }
.gear { width: 21px; height: 21px; margin-left: auto; margin-right: 10px; display: block; }
.app-body { flex: 1; display: flex; min-height: 0; }
.sidebar { width: 201px; flex: none; background: #f2edfd; display: flex; flex-direction: column; padding-bottom: 20px; }
.nav-item { height: 40px; display: flex; align-items: center; border-left: 5px solid transparent; padding: 0 0 1px 14px; gap: 18px; font-size: 16px; color: #7f5fe8; }
.nav-ic { width: 16px; height: 18px; display: block; flex: none; }
.nav-active { background: #d9d1f7; border-left-color: #7f5fe8; color: #2e2456; }
.nav-push { margin-top: auto; }
.main { flex: 1; min-width: 0; display: flex; flex-direction: column; }
.content { flex: 1; min-height: 0; display: flex; flex-direction: column; padding: 38px 0 20px; }
.prog-track { display: flex; align-items: center; margin-left: 299px; }
.pdot { width: 16px; height: 16px; border-radius: 50%; border: 2px solid #7f5fe8; background: radial-gradient(circle, #7f5fe8 0 4px, #fff 4.500px); flex: none; }
.pdot-off { border-color: #dcd3fa; background: radial-gradient(circle, #dcd3fa 0 4px, #fff 4.500px); }
.pline { width: 251px; height: 3px; background: #7f5fe8; }
.pline-off { background: #dcd3fa; }
.prog-labels { display: grid; grid-template-columns: repeat(3, 267px); margin: 8px 0 0 174px; text-align: center; font-size: 14px; line-height: 20px; color: #7f5fe8; }
.prog-labels .off { color: #dcd3fa; }
.columns { display: flex; margin: 94px 0 0 181px; color: #333; }
.col-left { width: 402px; }
h1 { margin: 0; font-size: 24px; font-weight: 500; line-height: 30px; color: #2c2c34; }
.lead { margin: 19px 0 0; font-size: 16px; line-height: 27px; }
.avoid { margin: 30px 0 0; font-size: 16px; line-height: 27px; }
.avoid-list { list-style: none; margin: 5px 0 0; padding: 0; }
.avoid-list li { height: 37px; display: flex; align-items: center; font-size: 16px; }
.aic { width: 46px; flex: none; padding-left: 6px; }
.aic svg { width: 26px; height: 24px; display: block; }
.col-right { padding-top: 24px; }
.words { display: grid; grid-template-columns: repeat(4, 80px); grid-auto-rows: 30px; gap: 10px; }
.word { position: relative; border: 1px solid #b09af2; border-radius: 3px; display: flex; align-items: center; justify-content: center; font-size: 14px; color: #333; }
.word i { position: absolute; left: 2px; top: -1px; font-style: normal; font-size: 12px; line-height: 16px; color: #9572f0; }
.note { display: flex; margin-top: 30px; }
.note-ic { width: 30px; height: 33px; flex: none; margin: 3px 15px 0 0; display: block; }
.note p { margin: 4px 0 0; font-size: 16px; line-height: 27px; font-weight: 500; }
.actions { margin: auto 0 0 458px; display: flex; gap: 30px; }
.btn { height: 40px; border-radius: 20px; font: 700 14px Lato, sans-serif; }
.btn-back { width: 96px; background: #fff; border: 1px solid #7f5fe8; color: #7f5fe8; font-weight: 400; }
.btn-next { width: 107px; background: #7f5fe8; border: 0; color: #fff; }
.hscroll { height: 12px; flex: none; background: #f0f0f0; display: flex; justify-content: space-between; align-items: center; padding: 0 5px 0 6px; }
.arrow-l { border: 4px solid transparent; border-right: 4px solid #a3a3a3; border-left: 0; }
.arrow-r { border: 4px solid transparent; border-left: 4px solid #a3a3a3; border-right: 0; }
.vscroll { width: 16px; flex: none; background: #f1f1f1; display: flex; flex-direction: column; align-items: center; }
.arrow-u { margin-top: 7px; border: 4px solid transparent; border-bottom: 4px solid #a3a3a3; border-top: 0; }
.thumb { width: 16px; height: 632px; margin-top: 6px; background: #c1c1c1; }
.arrow-d { margin-top: 4px; border: 4px solid transparent; border-top: 4px solid #505050; border-bottom: 0; }
```
